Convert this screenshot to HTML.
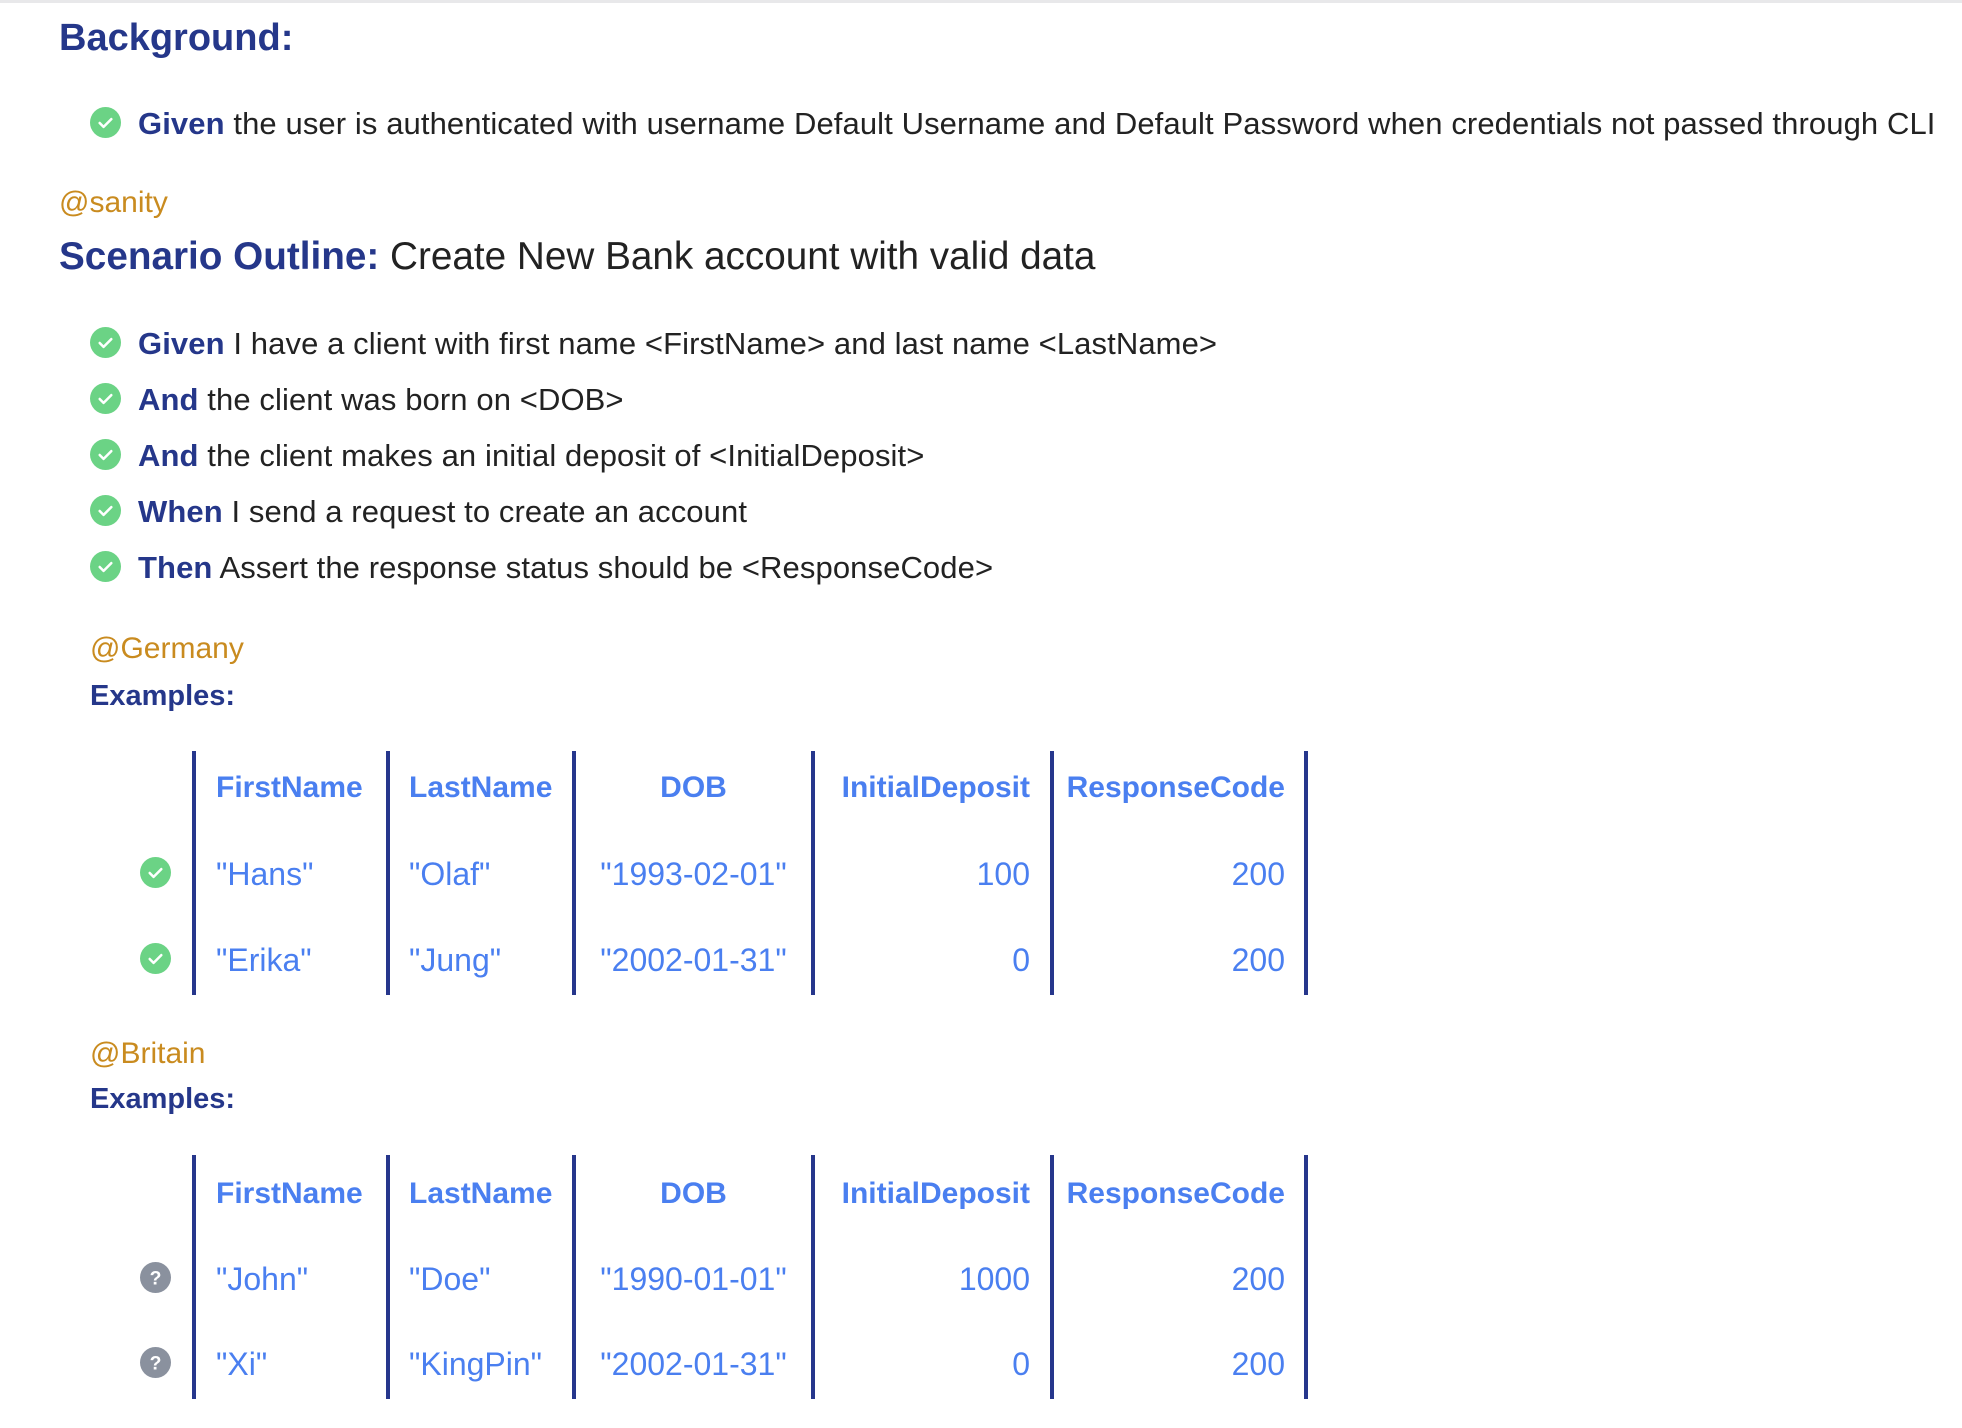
<!DOCTYPE html>
<html><head><meta charset="utf-8"><style>
body{margin:0;width:1962px;height:1428px;background:#fff;position:relative;overflow:hidden;font-family:"Liberation Sans",sans-serif;}
.a{position:absolute;line-height:1;white-space:nowrap;}
.h{color:#25378a;font-weight:bold;}
.k{color:#25378a;font-weight:bold;}
.s{font-size:31px;color:#222;letter-spacing:0.1px;}
.tag{font-size:30px;color:#c98b1f;}
.ic{position:absolute;width:31px;height:31px;}
.vl{position:absolute;width:4px;background:#26368c;}
.t{position:absolute;line-height:1;font-size:32px;color:#4a7ff0;white-space:nowrap;}
.th{font-weight:bold;font-size:30px;}
</style></head><body>
<div style="position:absolute;left:0;top:0;width:1962px;height:3px;background:#e8e8ea"></div>

<div class="a h" style="left:59px;top:19px;font-size:38px;">Background:</div>

<svg class="ic" style="left:90px;top:107px" viewBox="0 0 32 32"><circle cx="16" cy="16" r="16" fill="#6bd385"/><path d="M10 16.5l4 4 8-8" stroke="#fff" stroke-width="2.6" fill="none" stroke-linecap="round" stroke-linejoin="round"/></svg>
<div class="a s" style="left:138px;top:108px;"><span class="k">Given</span> the user is authenticated with username Default Username and Default Password when credentials not passed through CLI</div>

<div class="a tag" style="left:59px;top:188px;">@sanity</div>
<div class="a" style="left:59px;top:238px;font-size:38.7px;color:#222;"><span class="h">Scenario Outline:</span> Create New Bank account with valid data</div>

<svg class="ic" style="left:90px;top:327px" viewBox="0 0 32 32"><circle cx="16" cy="16" r="16" fill="#6bd385"/><path d="M10 16.5l4 4 8-8" stroke="#fff" stroke-width="2.6" fill="none" stroke-linecap="round" stroke-linejoin="round"/></svg>
<div class="a s" style="left:138px;top:328px;"><span class="k">Given</span> I have a client with first name &lt;FirstName&gt; and last name &lt;LastName&gt;</div>
<svg class="ic" style="left:90px;top:383px" viewBox="0 0 32 32"><circle cx="16" cy="16" r="16" fill="#6bd385"/><path d="M10 16.5l4 4 8-8" stroke="#fff" stroke-width="2.6" fill="none" stroke-linecap="round" stroke-linejoin="round"/></svg>
<div class="a s" style="left:138px;top:384px;"><span class="k">And</span> the client was born on &lt;DOB&gt;</div>
<svg class="ic" style="left:90px;top:439px" viewBox="0 0 32 32"><circle cx="16" cy="16" r="16" fill="#6bd385"/><path d="M10 16.5l4 4 8-8" stroke="#fff" stroke-width="2.6" fill="none" stroke-linecap="round" stroke-linejoin="round"/></svg>
<div class="a s" style="left:138px;top:440px;"><span class="k">And</span> the client makes an initial deposit of &lt;InitialDeposit&gt;</div>
<svg class="ic" style="left:90px;top:495px" viewBox="0 0 32 32"><circle cx="16" cy="16" r="16" fill="#6bd385"/><path d="M10 16.5l4 4 8-8" stroke="#fff" stroke-width="2.6" fill="none" stroke-linecap="round" stroke-linejoin="round"/></svg>
<div class="a s" style="left:138px;top:496px;"><span class="k">When</span> I send a request to create an account</div>
<svg class="ic" style="left:90px;top:551px" viewBox="0 0 32 32"><circle cx="16" cy="16" r="16" fill="#6bd385"/><path d="M10 16.5l4 4 8-8" stroke="#fff" stroke-width="2.6" fill="none" stroke-linecap="round" stroke-linejoin="round"/></svg>
<div class="a s" style="left:138px;top:552px;"><span class="k">Then</span> Assert the response status should be &lt;ResponseCode&gt;</div>

<div class="a tag" style="left:90px;top:634px;">@Germany</div>
<div class="a h" style="left:90px;top:682px;font-size:29px;">Examples:</div>

<div class="vl" style="left:192px;top:751px;height:244px"></div>
<div class="vl" style="left:386px;top:751px;height:244px"></div>
<div class="vl" style="left:572px;top:751px;height:244px"></div>
<div class="vl" style="left:811px;top:751px;height:244px"></div>
<div class="vl" style="left:1050px;top:751px;height:244px"></div>
<div class="vl" style="left:1304px;top:751px;height:244px"></div>
<div class="t th" style="left:216px;top:773px">FirstName</div>
<div class="t th" style="left:409px;top:773px">LastName</div>
<div class="t th" style="left:576px;width:235px;text-align:center;top:773px">DOB</div>
<div class="t th" style="left:815px;width:215px;text-align:right;top:773px">InitialDeposit</div>
<div class="t th" style="left:1054px;width:231px;text-align:right;top:773px">ResponseCode</div>

<svg class="ic" style="left:140px;top:857px" viewBox="0 0 32 32"><circle cx="16" cy="16" r="16" fill="#6bd385"/><path d="M10 16.5l4 4 8-8" stroke="#fff" stroke-width="2.6" fill="none" stroke-linecap="round" stroke-linejoin="round"/></svg>
<div class="t" style="left:216px;top:858px">"Hans"</div>
<div class="t" style="left:409px;top:858px">"Olaf"</div>
<div class="t" style="left:576px;width:235px;text-align:center;top:858px">"1993-02-01"</div>
<div class="t" style="left:815px;width:215px;text-align:right;top:858px">100</div>
<div class="t" style="left:1054px;width:231px;text-align:right;top:858px">200</div>

<svg class="ic" style="left:140px;top:943px" viewBox="0 0 32 32"><circle cx="16" cy="16" r="16" fill="#6bd385"/><path d="M10 16.5l4 4 8-8" stroke="#fff" stroke-width="2.6" fill="none" stroke-linecap="round" stroke-linejoin="round"/></svg>
<div class="t" style="left:216px;top:944px">"Erika"</div>
<div class="t" style="left:409px;top:944px">"Jung"</div>
<div class="t" style="left:576px;width:235px;text-align:center;top:944px">"2002-01-31"</div>
<div class="t" style="left:815px;width:215px;text-align:right;top:944px">0</div>
<div class="t" style="left:1054px;width:231px;text-align:right;top:944px">200</div>

<div class="a tag" style="left:90px;top:1039px;">@Britain</div>
<div class="a h" style="left:90px;top:1085px;font-size:29px;">Examples:</div>

<div class="vl" style="left:192px;top:1155px;height:244px"></div>
<div class="vl" style="left:386px;top:1155px;height:244px"></div>
<div class="vl" style="left:572px;top:1155px;height:244px"></div>
<div class="vl" style="left:811px;top:1155px;height:244px"></div>
<div class="vl" style="left:1050px;top:1155px;height:244px"></div>
<div class="vl" style="left:1304px;top:1155px;height:244px"></div>
<div class="t th" style="left:216px;top:1179px">FirstName</div>
<div class="t th" style="left:409px;top:1179px">LastName</div>
<div class="t th" style="left:576px;width:235px;text-align:center;top:1179px">DOB</div>
<div class="t th" style="left:815px;width:215px;text-align:right;top:1179px">InitialDeposit</div>
<div class="t th" style="left:1054px;width:231px;text-align:right;top:1179px">ResponseCode</div>

<svg class="ic" style="left:140px;top:1262px" viewBox="0 0 32 32"><circle cx="16" cy="16" r="16" fill="#8a919e"/><text x="16" y="23" text-anchor="middle" font-family="Liberation Sans" font-weight="bold" font-size="20" fill="#fff">?</text></svg>
<div class="t" style="left:216px;top:1263px">"John"</div>
<div class="t" style="left:409px;top:1263px">"Doe"</div>
<div class="t" style="left:576px;width:235px;text-align:center;top:1263px">"1990-01-01"</div>
<div class="t" style="left:815px;width:215px;text-align:right;top:1263px">1000</div>
<div class="t" style="left:1054px;width:231px;text-align:right;top:1263px">200</div>

<svg class="ic" style="left:140px;top:1347px" viewBox="0 0 32 32"><circle cx="16" cy="16" r="16" fill="#8a919e"/><text x="16" y="23" text-anchor="middle" font-family="Liberation Sans" font-weight="bold" font-size="20" fill="#fff">?</text></svg>
<div class="t" style="left:216px;top:1348px">"Xi"</div>
<div class="t" style="left:409px;top:1348px">"KingPin"</div>
<div class="t" style="left:576px;width:235px;text-align:center;top:1348px">"2002-01-31"</div>
<div class="t" style="left:815px;width:215px;text-align:right;top:1348px">0</div>
<div class="t" style="left:1054px;width:231px;text-align:right;top:1348px">200</div>
</body></html>
